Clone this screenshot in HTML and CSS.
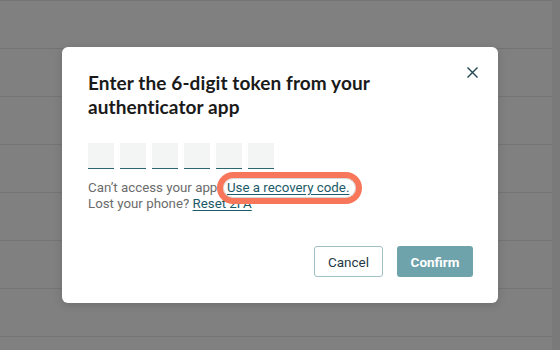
FILE: index.html
```html
<!DOCTYPE html>
<html>
<head>
<meta charset="utf-8">
<link rel="stylesheet" href="styles.css">
</head>
<body>
<div class="page">
  <div class="rows">
    <div class="row"></div><div class="row"></div><div class="row"></div><div class="row"></div>
    <div class="row"></div><div class="row"></div><div class="row"></div><div class="row last"></div>
  </div>
  <div class="scrollbar"></div>
</div>
<div class="overlay">
  <div class="modal">
    <button class="close" aria-label="Close">
      <svg width="11" height="11" viewBox="0 0 11 11"><path d="M0.5 0.5L10.5 10.5M10.5 0.5L0.5 10.5" stroke="#1f4650" stroke-width="1.4" fill="none"/></svg>
    </button>
    <h2 class="title">Enter the 6-digit token from your authenticator app</h2>
    <div class="digits">
      <span class="digit"></span><span class="digit"></span><span class="digit"></span>
      <span class="digit"></span><span class="digit"></span><span class="digit"></span>
    </div>
    <p class="help">Can’t access your app? <a class="link hl" href="#"><span class="ring"></span><span class="txt">Use a recovery code.</span></a><br>Lost your phone? <a class="link" href="#">Reset 2FA</a></p>
    <div class="actions">
      <button class="btn cancel">Cancel</button>
      <button class="btn confirm">Confirm</button>
    </div>
  </div>
</div>
</body>
</html>
```
FILE: styles.css
```css
html, body { margin: 0; padding: 0; }
body { width: 560px; height: 350px; overflow: hidden; background: #808080; font-family: Roboto, "Liberation Sans", sans-serif; position: relative; }
.page { display: flex; height: 350px; }
.rows { flex: 1; display: flex; flex-direction: column; }
.row { height: 47px; flex: none; border-top: 1px solid #747474; }
.row.last { flex: 1; height: auto; }
.scrollbar { width: 8px; background: #7a7a7a; }
.overlay { position: absolute; inset: 0; display: flex; align-items: center; justify-content: center; }
.modal { position: relative; width: 436px; height: 256px; box-sizing: border-box; background: #fff; border-radius: 6px; padding: 24px 25px 26px 26px; display: flex; flex-direction: column; box-shadow: 0 2px 8px rgba(0,0,0,0.15); }
.close { position: absolute; top: 20px; right: 20px; width: 11px; height: 11px; padding: 0; border: 0; background: none; display: block; }
.close svg { display: block; }
.title { margin: 0; font-family: Lato, "Open Sans", sans-serif; font-weight: 700; font-size: 19px; line-height: 24px; color: #1a1a1a; letter-spacing: 0.1px; width: 300px; }
.digits { display: flex; gap: 6px; margin-top: 24px; }
.digit { width: 26px; height: 25px; background: #f3f5f4; border-bottom: 1.5px solid #2a6672; }
.help { margin: 11px 0 0; font-size: 13.3px; line-height: 15.5px; color: #6b6b6b; }
.link { color: #1b5a68; text-decoration: underline; text-underline-offset: 2px; }
.hl { position: relative; }
.ring { position: absolute; left: -10px; right: -13px; top: -8px; bottom: -9px; border: 6px solid #f8775a; border-radius: 16px; background: #fff; z-index: 1; box-shadow: inset 0 0 0 1px #d8d8d8; }
.txt { position: relative; z-index: 2; }
.actions { margin-top: auto; display: flex; justify-content: flex-end; gap: 14px; }
.btn { height: 31px; border-radius: 3px; font-family: Roboto, "Liberation Sans", sans-serif; font-size: 13.5px; padding: 0; }
.cancel { width: 69px; background: #fff; border: 1px solid #9fbfc5; color: #1f3a44; }
.confirm { width: 76px; background: #6fa3ac; border: 0; color: #fff; font-weight: 700; }
```
